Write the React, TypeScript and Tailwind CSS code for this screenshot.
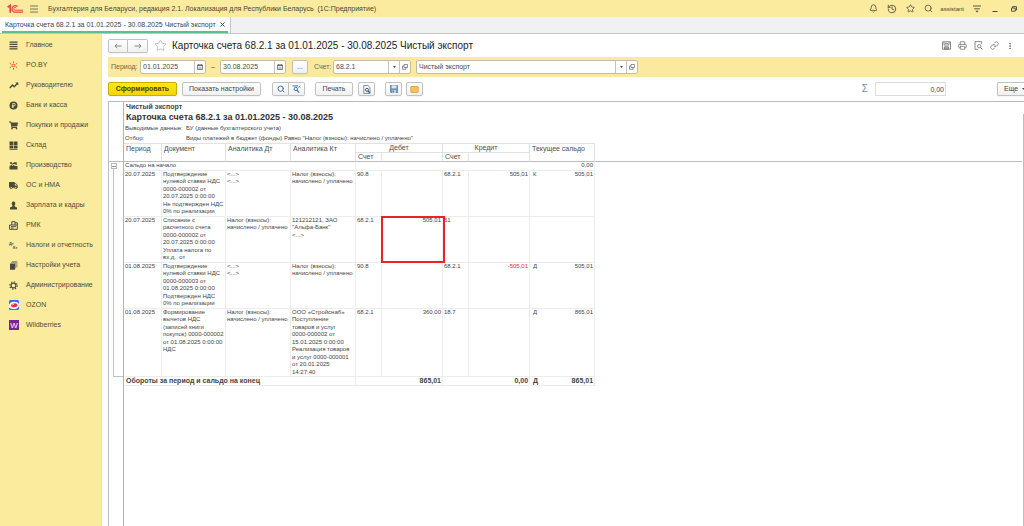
import React from 'react';
import {
  Bell,
  EllipsisVertical,
  History,
  Link,
  Mail,
  Printer,
  Search,
  Star,
} from 'lucide-react';
import { FaShoppingCart, FaTruck } from 'react-icons/fa';

const Logo: React.FC = () => (
  <svg width="17" height="10" viewBox="0 0 17 10" fill="none" stroke="#e2474a">
    <path d="M0.6 3.2 L3.2 1.4 V8.8" strokeWidth="1.7" />
    <path d="M10.6 2.6 A3.3 3.3 0 1 0 7.8 8.2 H16" strokeWidth="1.3" />
    <path d="M9.4 4.2 A1.4 1.4 0 1 0 8 6.2 H16" strokeWidth="1" />
  </svg>
);

const GearIcon: React.FC = () => (
  <svg width="9" height="9" viewBox="0 0 10 10" fill="none" stroke="#4a4a3c">
    <circle cx="5" cy="5" r="2.7" strokeWidth="1.3" />
    <circle cx="5" cy="5" r="4.1" strokeWidth="1.4" strokeDasharray="1.4 1.82" />
  </svg>
);

const menu = [
  {
    title: 'Главное',
    icon: (
      <svg width="9" height="9" viewBox="0 0 9 9" stroke="#4a4a3c" strokeWidth="1.2">
        <path d="M0.5 1.2H8.5 M0.5 3.4H8.5 M0.5 5.6H8.5 M0.5 7.8H8.5" />
      </svg>
    ),
  },
  {
    title: 'PO.BY',
    icon: (
      <svg width="9" height="9" viewBox="0 0 9 9" stroke="#e2572f" fill="none">
        <circle cx="4.5" cy="4.5" r="1.3" />
        <path d="M4.5 0.3V2 M4.5 7V8.7 M0.8 2.3L2.4 3.3 M6.6 5.7L8.2 6.7 M8.2 2.3L6.6 3.3 M2.4 5.7L0.8 6.7" />
      </svg>
    ),
  },
  {
    title: 'Руководителю',
    icon: (
      <svg width="10" height="9" viewBox="0 0 10 9" stroke="#4a4a3c" fill="none">
        <path d="M0.8 7L3.4 4L5.2 5.8L8 2.8" strokeWidth="1.4" />
        <path d="M6.2 1.5H9.3V4.6Z" fill="#4a4a3c" stroke="none" />
      </svg>
    ),
  },
  {
    title: 'Банк и касса',
    icon: (
      <svg width="9" height="9" viewBox="0 0 9 9" fill="none">
        <circle cx="4.5" cy="4.5" r="4" fill="#4a4a3c" />
        <path d="M3.8 7V2.4H5.1A1.1 1.1 0 0 1 5.1 4.8H2.8 M2.8 5.9H5" stroke="#faec9e" strokeWidth="0.8" />
      </svg>
    ),
  },
  { title: 'Покупки и продажи', icon: <FaShoppingCart size={9} /> },
  {
    title: 'Склад',
    icon: (
      <svg width="9" height="9" viewBox="0 0 9 9" fill="#4a4a3c">
        <path d="M0.5 0.5H4.2V4H0.5Z M4.8 0.5H8.5V4H4.8Z M0.5 4.6H4.2V7.6H0.5Z M4.8 4.6H8.5V7.6H4.8Z M0.5 8H8.5V8.7H0.5Z" />
      </svg>
    ),
  },
  {
    title: 'Производство',
    icon: (
      <svg width="9" height="9" viewBox="0 0 9 9" fill="#4a4a3c">
        <path d="M0.5 8.5V5L3 3.8V5L5.5 3.6V5H8.5V8.5Z" />
        <path d="M0.8 1.2H2.6L3.6 2.4L5.4 1L6.4 1.6L7.2 0.8L8.2 3.8H6.8L5.6 2.8L3.4 3.4L1.2 2.8Z" />
      </svg>
    ),
  },
  { title: 'ОС и НМА', icon: <FaTruck size={9} /> },
  {
    title: 'Зарплата и кадры',
    icon: (
      <svg width="9" height="9" viewBox="0 0 9 9" fill="#4a4a3c">
        <path d="M4.5 0.5A1.8 2.1 0 0 1 5.6 4.3L5.8 5.4L8 6.4V8.5H1V6.4L3.2 5.4L3.4 4.3A1.8 2.1 0 0 1 4.5 0.5Z" />
      </svg>
    ),
  },
  {
    title: 'РМК',
    icon: (
      <svg width="9" height="9" viewBox="0 0 9 9" fill="none" stroke="#4a4a3c">
        <path d="M0.6 4H8.3V8.3H0.6Z M2.8 4V0.7H6V4 M6 1.8H8.3V4" />
        <path d="M2 5.6H7 M2 7H4.6" strokeWidth="0.9" />
      </svg>
    ),
  },
  {
    title: 'Налоги и отчетность',
    icon: (
      <svg width="10" height="9" viewBox="0 0 10 9" fill="#4a4a3c" className="font-bold">
        <text x="0" y="4" fontSize="4">Дт</text>
        <text x="4" y="8" fontSize="4">Кт</text>
      </svg>
    ),
  },
  {
    title: 'Настройки учета',
    icon: (
      <svg width="9" height="9" viewBox="0 0 9 9" fill="#4a4a3c">
        <path d="M1 2.5H6V8.7H1Z M2 1.5H7V7.6H6.5V2H2Z M3 0.5H8.2V6.6H7.6V1H3Z" />
      </svg>
    ),
  },
  { title: 'Администрирование', icon: <GearIcon /> },
  {
    title: 'OZON',
    icon: (
      <svg width="10" height="10" viewBox="0 0 10 10">
        <rect width="10" height="10" rx="1.5" fill="#2a6fe8" />
        <path d="M0 5.5Q0.6 2.4 4 1.8Q8.6 1.2 10 4V6Q9 8.8 5.4 9.2Q1.4 9.2 0 7.5Z" fill="#fff" />
        <ellipse cx="5.2" cy="5.4" rx="3.2" ry="2" fill="#ea2a45" transform="rotate(-8 5 5)" />
        <path d="M3.2 4.6H5" stroke="#fff" strokeWidth="0.7" />
      </svg>
    ),
  },
  {
    title: 'Wildberries',
    icon: (
      <svg width="10" height="10" viewBox="0 0 10 10">
        <rect width="10" height="10" fill="#7b2390" />
        <text x="5" y="8" fontSize="8" textAnchor="middle" fill="#fff">W</text>
      </svg>
    ),
  },
];

const entries = [
  {
    date: '20.07.2025',
    doc: ['Подтверждение', 'нулевой ставки НДС', '0000-000002 от', '20.07.2025 0:00:00', 'Не подтвержден НДС', '0% по реализации'],
    dt: ['<...>', '<...>'],
    kt: ['Налог (взносы):', 'начислено / уплачено'],
    debitAcc: '90.8',
    debit: '',
    creditAcc: '68.2.1',
    credit: '505,01',
    side: 'К',
    balance: '505,01',
  },
  {
    date: '20.07.2025',
    doc: ['Списание с', 'расчетного счета', '0000-000002 от', '20.07.2025 0:00:00', 'Уплата налога по', 'вх.д.  от'],
    dt: ['Налог (взносы):', 'начислено / уплачено'],
    kt: ['121212121, ЗАО', '"Альфа-Банк"', '<...>'],
    debitAcc: '68.2.1',
    debit: '505,01',
    creditAcc: '51',
    credit: '',
    side: '',
    balance: '',
    marked: true,
  },
  {
    date: '01.08.2025',
    doc: ['Подтверждение', 'нулевой ставки НДС', '0000-000003 от', '01.08.2025 0:00:00', 'Подтвержден НДС', '0% по реализации'],
    dt: ['<...>', '<...>'],
    kt: ['Налог (взносы):', 'начислено / уплачено'],
    debitAcc: '90.8',
    debit: '',
    creditAcc: '68.2.1',
    credit: '-505,01',
    side: 'Д',
    balance: '505,01',
  },
  {
    date: '01.08.2025',
    doc: ['Формирование', 'вычетов НДС', '(записей книги', 'покупок) 0000-000002', 'от 01.08.2025 0:00:00', 'НДС'],
    dt: ['Налог (взносы):', 'начислено / уплачено'],
    kt: ['ООО «Стройснаб»', 'Поступление', 'товаров и услуг', '0000-000002 от', '15.01.2025 0:00:00', 'Реализация товаров', 'и услуг 0000-000001', 'от 20.01.2025', '14:27:40'],
    debitAcc: '68.2.1',
    debit: '360,00',
    creditAcc: '18.7',
    credit: '',
    side: 'Д',
    balance: '865,01',
  },
];

const Lines: React.FC<{ items: string[] }> = ({ items }) => (
  <>
    {items.map((line, i) => (
      <div key={i} className="whitespace-pre">
        {line}
      </div>
    ))}
  </>
);

const CalendarIcon: React.FC = () => (
  <svg width="6" height="6" viewBox="0 0 6 6" fill="none" stroke="#666">
    <path d="M0.5 1H5.5V5.5H0.5Z" strokeWidth="0.8" />
    <path d="M0.5 1.5H5.5 M1.7 0V1.5 M4.3 0V1.5" strokeWidth="1" />
    <path d="M1.5 3.2H4.5 M1.5 4.4H4.5" strokeWidth="0.5" />
  </svg>
);

const OpenIcon: React.FC = () => (
  <svg width="6" height="6" viewBox="0 0 6 6" fill="none" stroke="#666" strokeWidth="0.7">
    <path d="M2 0.5H5.5V3.5H2Z M2 2H0.5V5.3H4V3.5" />
  </svg>
);

const ArrowIcon: React.FC = () => (
  <svg width="3" height="2" viewBox="0 0 3 2" fill="#555" className="shrink-0">
    <path d="M0 0H3L1.5 2Z" />
  </svg>
);

const field = 'flex h-3.5 rounded-xs border border-[#c2bda3] bg-white';
const fieldInput = 'min-w-0 flex-1 px-0.5 outline-none';
const fieldButton = 'flex w-[11px] items-center justify-center border-l border-[#c4c4c4]';
const button =
  'flex h-3.5 items-center justify-center rounded-xs border border-[#c2c2c2] bg-linear-to-b from-white to-[#f0f0f0] shadow-xs';

const TitleBar: React.FC = () => (
  <header className="flex h-[17px] items-center bg-[#fbeb9e] pl-[7px] text-[#4a4636]">
    <Logo />
    <button aria-label="Меню" className="ml-1.5">
      <svg width="8" height="8" viewBox="0 0 8 8" stroke="#6b6650" strokeWidth="0.9">
        <path d="M0 1H8 M0 4H8 M0 7H8" />
      </svg>
    </button>
    <span className="ml-2.5 whitespace-pre">
      Бухгалтерия для Беларуси, редакция 2.1. Локализация для Республики Беларусь  (1С:Предприятие)
    </span>
    <div className="ml-auto flex items-center gap-[9px] pr-[7px]">
      <button aria-label="Уведомления"><Bell size={9} /></button>
      <button aria-label="История"><History size={10} /></button>
      <button aria-label="Избранное"><Star size={9} /></button>
      <button aria-label="Поиск"><Search size={9} /></button>
      <a href="#user" className="-ml-0.5 text-[6px]">assistant</a>
      <button aria-label="Настройки">
        <svg width="8" height="8" viewBox="0 0 8 8" stroke="#4a4636" strokeWidth="0.9">
          <path d="M0 1H8 M1.2 3.8H6.8" />
          <path d="M2.4 5.8H5.6L4 7.4Z" fill="#4a4636" stroke="none" />
        </svg>
      </button>
      <button aria-label="Свернуть" className="ml-0.5">
        <svg width="6" height="6" viewBox="0 0 6 6" stroke="#4a4636">
          <path d="M0.5 5.5H5.5" />
        </svg>
      </button>
      <button aria-label="Развернуть" className="ml-1">
        <svg width="6" height="6" viewBox="0 0 6 6" stroke="#4a4636" fill="none" strokeWidth="0.9">
          <path d="M0.5 2H4.2V5.2H0.5Z M1.6 2V0.6H5.5V4H4.2" />
        </svg>
      </button>
    </div>
  </header>
);

const Sidebar: React.FC = () => (
  <nav className="w-[102px] shrink-0 border-r border-[#f3e3a0] bg-[#fbec9d] pt-px text-[#4f4b39]">
    {menu.map((item) => (
      <a key={item.title} href="#section" className="flex h-5 items-center pl-2">
        <span className="mr-[7px] flex w-[11px] justify-center">{item.icon}</span>
        {item.title}
      </a>
    ))}
  </nav>
);

const FilterBar: React.FC = () => (
  <div className="flex h-5 items-center bg-[#fce9a0] pl-[3px] text-[#4a4a4a]">
    <label htmlFor="from" className="w-[29px] text-[#6d674d]">Период:</label>
    <div className={`${field} w-[66px]`}>
      <input id="from" className={fieldInput} defaultValue="01.01.2025" />
      <button aria-label="Выбрать дату" className={fieldButton}><CalendarIcon /></button>
    </div>
    <label htmlFor="to" className="w-3.5 text-center">–</label>
    <div className={`${field} w-[66px]`}>
      <input id="to" className={fieldInput} defaultValue="30.08.2025" />
      <button aria-label="Выбрать дату" className={fieldButton}><CalendarIcon /></button>
    </div>
    <button className={`${button} ml-1.5 w-4`}>...</button>
    <label htmlFor="account" className="ml-1.5 w-[19px] text-[#6d674d]">Счет:</label>
    <div className={`${field} w-[78px]`}>
      <input id="account" className={fieldInput} defaultValue="68.2.1" />
      <button aria-label="Список" className={fieldButton}><ArrowIcon /></button>
      <button aria-label="Открыть" className={fieldButton}><OpenIcon /></button>
    </div>
    <div className={`${field} ml-[5px] w-[222px]`}>
      <input aria-label="Организация" className={fieldInput} defaultValue="Чистый экспорт" />
      <button aria-label="Список" className={fieldButton}><ArrowIcon /></button>
      <button aria-label="Открыть" className={fieldButton}><OpenIcon /></button>
    </div>
  </div>
);

const Toolbar: React.FC = () => (
  <div className="flex h-6 items-center text-[#444]">
    <button className="h-3.5 w-[69px] rounded-xs border border-[#c9ae00] bg-linear-to-b from-[#ffe817] to-[#f5d500] font-bold text-[#4d4300] shadow-xs">
      Сформировать
    </button>
    <button className={`${button} ml-[5px] w-[79px]`}>Показать настройки</button>
    <div className="ml-[11px] flex">
      <button aria-label="Найти" className={`${button} w-[17px] rounded-r-none`}>
        <Search size={8} strokeWidth={3} className="text-[#3e76ad]" />
      </button>
      <button aria-label="Отменить поиск" className={`${button} w-4 rounded-l-none border-l-0`}>
        <svg width="9" height="8" viewBox="0 0 9 8" fill="none" stroke="#3e76ad">
          <circle cx="3.8" cy="3.9" r="1.7" />
          <path d="M5 5.2L7 7.6" strokeWidth="1.3" />
          <path d="M0.5 0.9H6" strokeWidth="1" />
          <path d="M6.6 0.8L8.4 2.6 M8.4 0.8L6.6 2.6" strokeWidth="0.8" />
        </svg>
      </button>
    </div>
    <button className={`${button} ml-2.5 w-[38px]`}>Печать</button>
    <button aria-label="Просмотр" className={`${button} ml-[5px] w-[17px]`}>
      <svg width="8" height="9" viewBox="0 0 8 9" fill="none">
        <path d="M0.8 0.5H5L7 2.4V8.4H0.8Z" stroke="#777" strokeWidth="0.8" />
        <circle cx="4" cy="4.8" r="1.5" stroke="#2d6192" />
        <path d="M5 6L7 8" stroke="#2d6192" strokeWidth="1.2" />
      </svg>
    </button>
    <button aria-label="Сохранить" className={`${button} ml-2.5 w-[17px]`}>
      <svg width="8" height="8" viewBox="0 0 8 8">
        <path d="M0 0H8V8H0.8L0 7.2Z" fill="#6a93bd" />
        <path d="M1.6 0.4H6.4V3.4H1.6Z" fill="#dbe7f3" />
        <path d="M2 5H6V8H2Z" fill="#c3d3e4" />
        <path d="M2.6 5.6H3.8V7.4H2.6Z" fill="#3b638c" />
      </svg>
    </button>
    <button aria-label="Отправить" className={`${button} ml-1 w-[17px]`}>
      <Mail size={9} fill="#f4c45c" stroke="#d69a35" />
    </button>
    <label htmlFor="sum" className="mr-[7px] ml-auto text-[10px] text-[#7c8aa5]">Σ</label>
    <input id="sum" className="h-3.5 w-[71px] border border-[#ddd] pr-px text-right outline-none" defaultValue="0,00" />
    <button className={`${button} ml-[51px] w-[27px] justify-start gap-1 overflow-hidden rounded-r-none border-r-0 pl-1.5`}>
      Еще
      <ArrowIcon />
    </button>
  </div>
);

const cell = 'border-r border-b border-[#ececec] px-px py-0';
const head = 'border-r border-b border-[#e2e2e2] px-0.5 py-0 font-normal';

const Report: React.FC = () => (
  <table className="w-full table-fixed border-separate border-spacing-0 text-left align-top text-[6px] leading-tight text-[#444]">
    <colgroup>
      <col className="w-[38px]" />
      <col className="w-16" />
      <col className="w-[65px]" />
      <col className="w-[65px]" />
      <col className="w-[26px]" />
      <col className="w-[61px]" />
      <col className="w-[26px]" />
      <col className="w-[61px]" />
      <col className="w-[65px]" />
      <col />
    </colgroup>
    <thead className="align-top text-[7px] leading-[9px] text-[#4d4d4d]">
      <tr className="h-2.5">
        <th rowSpan={2} className={`${head} border-t border-b-[#bcbcbc]`}>Период</th>
        <th rowSpan={2} className={`${head} border-t border-b-[#bcbcbc]`}>Документ</th>
        <th rowSpan={2} className={`${head} border-t border-b-[#bcbcbc]`}>Аналитика Дт</th>
        <th rowSpan={2} className={`${head} border-t border-b-[#bcbcbc]`}>Аналитика Кт</th>
        <th colSpan={2} className={`${head} border-t text-center leading-[8px]`}>Дебет</th>
        <th colSpan={2} className={`${head} border-t text-center leading-[8px]`}>Кредит</th>
        <th rowSpan={2} className={`${head} border-t border-b-[#bcbcbc] whitespace-nowrap`}>Текущее сальдо</th>
        <td rowSpan={2} className="border-b border-[#bcbcbc] p-0" />
      </tr>
      <tr className="h-[9px] leading-[8px]">
        <th className={`${head} border-b-[#bcbcbc]`}>Счет</th>
        <th className={`${head} border-b-[#bcbcbc]`} />
        <th className={`${head} border-b-[#bcbcbc]`}>Счет</th>
        <th className={`${head} border-b-[#bcbcbc]`} />
      </tr>
    </thead>
    <tbody className="align-top">
      <tr className="h-2">
        <td colSpan={4} className={cell}>Сальдо на начало</td>
        <td colSpan={5} className={`${cell} text-right`}>0,00</td>
      </tr>
      {entries.map((row, i) => (
        <tr key={i} className="h-[46px]">
          <td className={cell}>{row.date}</td>
          <td className={cell}><Lines items={row.doc} /></td>
          <td className={cell}><Lines items={row.dt} /></td>
          <td className={cell}><Lines items={row.kt} /></td>
          <td className={cell}>{row.debitAcc}</td>
          <td className={`${cell} relative text-right`}>
            {row.debit}
            {row.marked && (
              <span className="absolute -top-px -right-[3px] -bottom-px -left-px z-10 border-2 border-[#ea2328]" />
            )}
          </td>
          <td className={cell}>{row.creditAcc}</td>
          <td className={`${cell} text-right ${row.credit.startsWith('-') ? 'text-[#f02a1d]' : ''}`}>{row.credit}</td>
          <td className={cell}>
            <div className="flex justify-between pl-0.5">
              <span>{row.side}</span>
              <span>{row.balance}</span>
            </div>
          </td>
        </tr>
      ))}
    </tbody>
    <tfoot className="align-top text-[7px] leading-[8px] font-bold">
      <tr className="h-[9px]">
        <td colSpan={4} className="border-r border-b border-[#ececec] py-0 pr-px pl-0.5">Обороты за период и сальдо на конец</td>
        <td colSpan={2} className={`${cell} text-right`}>865,01</td>
        <td colSpan={2} className={`${cell} text-right`}>0,00</td>
        <td className={cell}>
          <div className="flex justify-between pl-0.5">
            <span>Д</span>
            <span>865,01</span>
          </div>
        </td>
      </tr>
    </tfoot>
  </table>
);

const Sheet: React.FC = () => (
  <section className="flex flex-1 border-t border-l border-[#bcbcbc] bg-white">
    <div className="flex w-[15px] shrink-0 flex-col border-r border-[#b4b4b4]">
      <div className="h-[60px] border-b border-[#bcbcbc]" />
      <button aria-label="Свернуть группу" className="mt-px ml-0.5 flex size-1.5 items-center justify-center border border-[#bcbcbc]">
        <span className="h-px w-1 bg-[#999]" />
      </button>
      <div className="ml-1 h-[208px] border-b border-l border-[#c0c0c0]" />
    </div>
    <div className="mr-px min-w-0 flex-1">
      <div className="h-[9px] pl-0.5 text-[7px] leading-[9px] font-bold text-[#444]">Чистый экспорт</div>
      <h2 className="h-3 pl-0.5 text-[9px] leading-[12px] font-bold text-[#333]">
        Карточка счета 68.2.1 за 01.01.2025 - 30.08.2025
      </h2>
      <dl className="grid grid-cols-[61px_1fr] pl-px text-[6px] leading-[10px] text-[#444]">
        <dt className="whitespace-nowrap">Выводимые данные:</dt>
        <dd>БУ (данные бухгалтерского учета)</dd>
        <dt>Отбор:</dt>
        <dd>Виды платежей в бюджет (фонды) Равно "Налог (взносы): начислено / уплачено"</dd>
      </dl>
      <Report />
    </div>
    <div className="mt-3 w-px bg-[#bcbcbc]" />
  </section>
);

const App: React.FC = () => {
  return (
    <div className="flex min-h-screen flex-col overflow-hidden bg-white font-['Liberation_Sans',Arial,sans-serif] text-[7px] leading-[10px]">
      <TitleBar />
      <div className="flex h-[17px] border-b border-[#c6c6c6] bg-[#f1f1f1]">
        <div className="flex items-center border-r border-[#c6c6c6] bg-white px-0.5">
          <div className="flex h-full items-center gap-1 border-b-2 border-[#5cbf8d] px-[3px] pt-px text-[#444]">
            <a href="#card">Карточка счета 68.2.1 за 01.01.2025 - 30.08.2025 Чистый экспорт</a>
            <button aria-label="Закрыть">
              <svg width="5" height="5" viewBox="0 0 5 5" stroke="#444">
                <path d="M0.5 0.5L4.5 4.5 M4.5 0.5L0.5 4.5" />
              </svg>
            </button>
          </div>
        </div>
      </div>
      <div className="flex flex-1">
        <Sidebar />
        <main className="flex min-w-0 flex-1 flex-col pl-1.5">
          <div className="flex h-[23px] items-center">
            <button aria-label="Назад" className={`${button} w-5 rounded-r-none`}>
              <svg width="8" height="6" viewBox="0 0 8 6" fill="none" stroke="#888">
                <path d="M7.5 3H1 M3.2 0.8L1 3L3.2 5.2" />
              </svg>
            </button>
            <button aria-label="Вперед" className={`${button} w-5 rounded-l-none border-l-0`}>
              <svg width="8" height="6" viewBox="0 0 8 6" fill="none" stroke="#888">
                <path d="M0.5 3H7 M4.8 0.8L7 3L4.8 5.2" />
              </svg>
            </button>
            <button aria-label="В избранное" className="ml-1.5 text-[#b4b4b4]">
              <Star size={13} strokeWidth={1.5} />
            </button>
            <h1 className="ml-[5px] text-[10px] text-[#222]">
              Карточка счета 68.2.1 за 01.01.2025 - 30.08.2025 Чистый экспорт
            </h1>
            <div className="ml-auto flex items-center gap-[7px] pr-2.5 text-[#707070]">
              <button aria-label="Сохранить">
                <svg width="9" height="9" viewBox="0 0 9 9" fill="none" stroke="currentColor" strokeWidth="0.8">
                  <path d="M0.5 0.8H8.5V8.2H0.5Z M2 0.8V4H7V0.8 M3 2.4H6" />
                  <path d="M2.4 8.2V5.8H6.6V8.2Z" fill="currentColor" fillOpacity="0.5" />
                </svg>
              </button>
              <button aria-label="Печать"><Printer size={9} /></button>
              <button aria-label="Предварительный просмотр">
                <svg width="9" height="9" viewBox="0 0 9 9" fill="none" stroke="currentColor" strokeWidth="0.8">
                  <path d="M4 8.3H1V0.6H7.4V3" />
                  <circle cx="5.2" cy="5.2" r="1.7" />
                  <path d="M6.4 6.4L8.4 8.4" strokeWidth="1" />
                </svg>
              </button>
              <button aria-label="Ссылка"><Link size={9} /></button>
              <button aria-label="Еще"><EllipsisVertical size={8} strokeWidth={3} /></button>
            </div>
          </div>
          <FilterBar />
          <Toolbar />
          <Sheet />
        </main>
      </div>
    </div>
  );
};

export default App;
